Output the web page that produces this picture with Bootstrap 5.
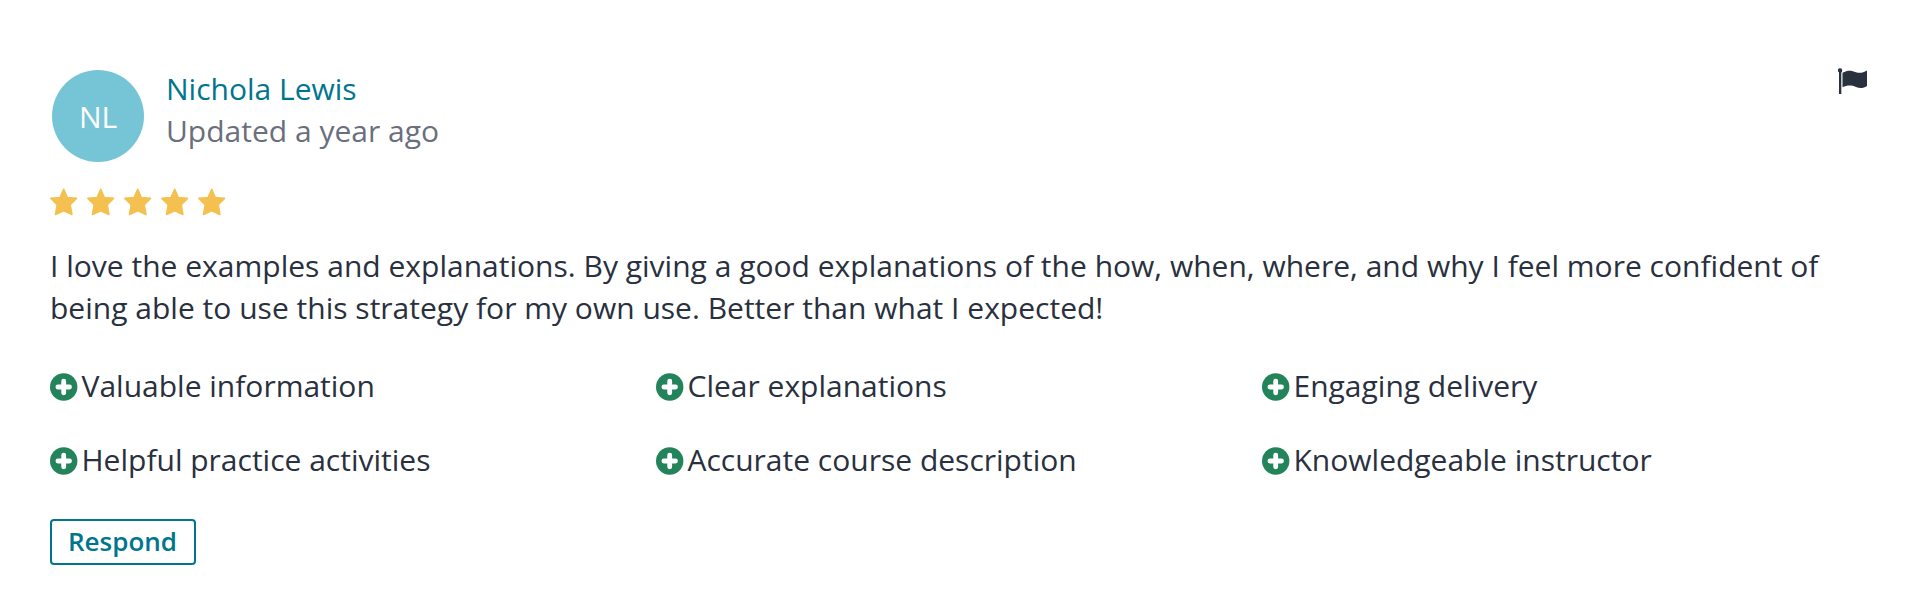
<!DOCTYPE html>
<html lang="en">
<head>
<meta charset="utf-8">
<meta name="viewport" content="width=device-width, initial-scale=1">
<title>Course review</title>
<link rel="stylesheet" href="https://cdn.jsdelivr.net/npm/bootstrap@5.3.0/dist/css/bootstrap.min.css">
<style>
body{font-family:"Open Sans",sans-serif;font-size:30px;line-height:42px;color:#29303e;background:#fff}
.review{padding:68px 50px 0}
.review-avatar{width:92px;height:92px;margin:2px 22px 0 2px;padding-top:1px;background:#76c5d6}
.review-name{color:#00758e}
.review-date{color:#6a6f7d}
.review-flag{width:30px;height:27px}
.review-stars{gap:8.9px;margin-top:26px}
.review-stars svg{width:28px;height:28px}
.review-text{margin:29px 0 36px;letter-spacing:.01px}
.review-points{display:grid;grid-template-columns:repeat(3,606px);row-gap:32px}
.review-points svg{width:28px;height:28px;margin:2px 3.5px 0 0}
.review-respond{margin-top:38px;width:146px;height:46px;padding:0 1px 0 0;border:2px solid #00758e;border-radius:4px;color:#00758e;font-size:26px;font-weight:600;line-height:38px}
.review-respond span{display:block;margin-top:-2px}
</style>
</head>
<body>
<svg class="d-none">
<symbol id="star" viewBox="0 0 28 28"><path d="M13.700 1.300 17.300 9.500 26.500 10.400 20.200 16.800 21.900 26.400 13.700 22.700 5.500 26.400 7.200 16.800.900 10.400 10.100 9.500Z" fill="#f4c04f" stroke="#f4c04f" stroke-width="1.600" stroke-linejoin="round"/></symbol>
<symbol id="plus" viewBox="0 0 28 28"><circle cx="13.7" cy="14" r="13.7" fill="#23845b"/><path d="M13.700 8.200v11.600M7.900 14h11.600" stroke="#fff" stroke-width="4.800" stroke-linecap="round"/><path d="M13.700 6.800v14.400M6.500 14h14.400" stroke="#fff" stroke-width="3.600"/></symbol>
</svg>
<main class="review">
<header class="d-flex align-items-start">
<div class="review-avatar rounded-circle text-white d-flex align-items-center justify-content-center flex-shrink-0">NL</div>
<div class="flex-grow-1">
<div><a class="review-name text-decoration-none" href="#">Nichola Lewis</a></div>
<div class="review-date">Updated a year ago</div>
</div>
<svg class="review-flag" viewBox="0 0 30 27" fill="#29303e"><circle cx="2.100" cy="2.400" r="2.200"/><path d="M1 2h2.300v24H1zM4.500 4.800C10 1.500 14 2.600 18 4.200 22 5.500 25 4.600 29 2.500V18C25 20.500 22 20.600 18 18.900 13 16.800 9 17 4.500 19.300Z"/></svg>
</header>
<div class="review-stars d-flex" role="img" aria-label="5 out of 5 stars">
<svg><use href="#star"/></svg><svg><use href="#star"/></svg><svg><use href="#star"/></svg><svg><use href="#star"/></svg><svg><use href="#star"/></svg>
</div>
<p class="review-text">I love the examples and explanations. By giving a good explanations of the how, when, where, and why I feel more confident of being able to use this strategy for my own use. Better than what I expected!</p>
<ul class="review-points list-unstyled mb-0">
<li class="d-flex align-items-center"><svg><use href="#plus"/></svg>Valuable information</li>
<li class="d-flex align-items-center"><svg><use href="#plus"/></svg>Clear explanations</li>
<li class="d-flex align-items-center"><svg><use href="#plus"/></svg>Engaging delivery</li>
<li class="d-flex align-items-center"><svg><use href="#plus"/></svg>Helpful practice activities</li>
<li class="d-flex align-items-center"><svg><use href="#plus"/></svg>Accurate course description</li>
<li class="d-flex align-items-center"><svg><use href="#plus"/></svg>Knowledgeable instructor</li>
</ul>
<button type="button" class="review-respond btn d-block"><span>Respond</span></button>
</main>
<script src="https://cdn.jsdelivr.net/npm/bootstrap@5.3.0/dist/js/bootstrap.bundle.min.js"></script>
</body>
</html>
